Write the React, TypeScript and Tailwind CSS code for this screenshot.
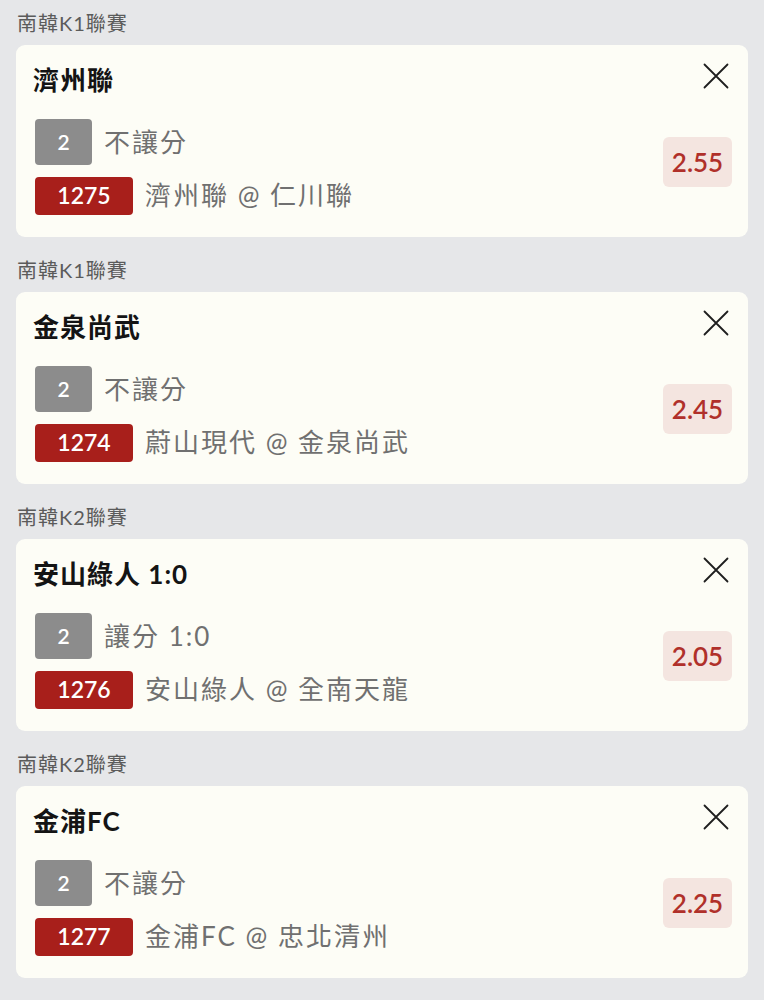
type Bet = {
  league: string
  title: string
  pick: string
  code: string
  match: string
  odds: string
}

const bets: Bet[] = [
  { league: '南韓K1聯賽', title: '濟州聯', pick: '不讓分', code: '1275', match: '濟州聯 @ 仁川聯', odds: '2.55' },
  { league: '南韓K1聯賽', title: '金泉尚武', pick: '不讓分', code: '1274', match: '蔚山現代 @ 金泉尚武', odds: '2.45' },
  { league: '南韓K2聯賽', title: '安山綠人 1:0', pick: '讓分 1:0', code: '1276', match: '安山綠人 @ 全南天龍', odds: '2.05' },
  { league: '南韓K2聯賽', title: '金浦FC', pick: '不讓分', code: '1277', match: '金浦FC @ 忠北清州', odds: '2.25' },
]

const font = "font-['Lato','Noto_Sans_CJK_TC',sans-serif]"

function CloseIcon() {
  return (
    <svg width="26" height="26" viewBox="0 0 26 26" fill="none" stroke="#1e1e1e" strokeWidth="1.8" strokeLinecap="round">
      <path d="M1.5 1.5 L24.5 24.5 M24.5 1.5 L1.5 24.5" />
    </svg>
  )
}

function BetCard({ bet }: { bet: Bet }) {
  return (
    <div className="mb-[10px]">
      <div className="h-[45px] flex items-center pl-[17px] text-[20px] text-[#5b5b5b] tracking-[1px]">{bet.league}</div>
      <div className="mx-[16px] h-[192px] rounded-[9px] bg-[#fdfdf6] relative pl-[19px] pr-[16px] pt-[19px]">
        <h2 className="-ml-[2px] text-[26px] leading-[32px] font-bold text-[#141414] tracking-[1px]">{bet.title}</h2>
        <button className="absolute right-[19px] top-[18px]">
          <CloseIcon />
        </button>
        <div className="mt-[23px] flex items-center">
          <div className="flex-1 flex flex-col gap-[11px]">
            <div className="flex items-center">
              <span className="w-[57px] h-[46px] rounded-[4px] bg-[#8c8c8c] text-white text-[21px] font-semibold flex items-center justify-center">2</span>
              <span className="ml-[12px] text-[26px] text-[#707070] tracking-[2px]">{bet.pick}</span>
            </div>
            <div className="flex items-center">
              <span className="w-[98px] h-[38px] rounded-[4px] bg-[#a81f1b] text-white text-[23px] font-semibold flex items-center justify-center">{bet.code}</span>
              <span className="ml-[12px] text-[26px] text-[#707070] tracking-[2px] whitespace-pre">{bet.match}</span>
            </div>
          </div>
          <div className="mb-[10px] w-[69px] h-[50px] rounded-[6px] bg-[#f4e5e0] text-[#b0302a] text-[26px] font-semibold flex items-center justify-center">{bet.odds}</div>
        </div>
      </div>
    </div>
  )
}

export default function App() {
  return (
    <div className={`${font} min-h-[1000px] bg-[#e6e7e9]`}>
      {bets.map((b, i) => (
        <BetCard key={i} bet={b} />
      ))}
    </div>
  )
}
